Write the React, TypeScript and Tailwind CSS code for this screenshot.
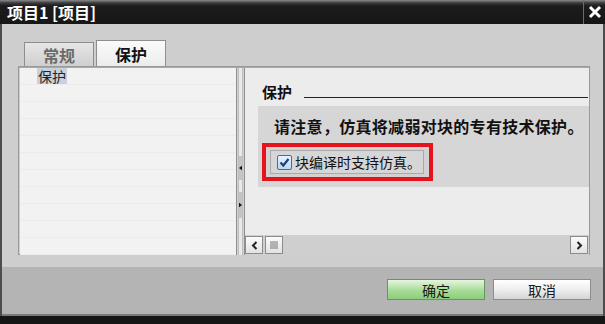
import React from "react";

const cjk = { fontFamily: '"Noto Sans CJK SC", "Noto Sans", sans-serif' };

function TitleBar() {
  return (
    <div className="relative h-[24px] flex items-center bg-[linear-gradient(#8a8a8a_0px,#3a3a3a_3px,#1c1c1c_6px,#161616_100%)]">
      <span className="pl-[7px] text-[16px] font-bold text-white leading-none">
        项目1 [项目]
      </span>
      <div className="ml-auto flex h-full items-center">
        <div className="h-full w-px bg-[#6a6a6a]" />
        <div className="w-[21px] flex items-center justify-center">
          <svg width="14" height="14" viewBox="0 0 14 14">
            <path d="M2 2 L12 12 M12 2 L2 12" stroke="#fff" strokeWidth="3" />
          </svg>
        </div>
      </div>
    </div>
  );
}

function Tabs() {
  return (
    <div className="flex items-end pl-[22px] pt-[17px] h-[42px]">
      <div className="w-[70px] h-[24px] flex items-center justify-center border border-b-0 border-[#8e8e8e] bg-[linear-gradient(#e6e6e6,#cfcfcf)] text-[16px] font-bold text-[#6b6b6b]">
        常规
      </div>
      <div className="ml-[2px] w-[70px] h-[26px] flex items-center justify-center border border-b-0 border-[#8e8e8e] bg-[linear-gradient(#fafafa,#ececec)] text-[16px] font-bold text-[#111]">
        保护
      </div>
    </div>
  );
}

function TreePane() {
  const rows = Array.from({ length: 11 });
  return (
    <div className="w-[216px] shrink-0 bg-[#f2f2f2] flex flex-col">
      {rows.map((_, i) => (
        <div key={i} className="h-[17px] shrink-0 border-b border-[#ebebeb] pl-[17px] flex items-center">
          {i === 0 && (
            <span className="px-[1px] bg-[#c9d1dc] text-[14px] leading-[16px] text-[#222]">保护</span>
          )}
        </div>
      ))}
    </div>
  );
}

function Splitter() {
  return (
    <div className="w-[9px] shrink-0 bg-[#d2d2d2] border-x border-[#8f8f8f] flex flex-col items-center">
      <div className="w-[5px] flex-1 bg-[#e9e9e9] border-x border-[#bdbdbd] flex flex-col">
        <div className="h-[88px]" />
        <div className="h-[24px] bg-[#c4c4c4] flex items-center justify-center">
          <svg width="4" height="6" viewBox="0 0 4 6">
            <path d="M4 0 L0 3 L4 6 Z" fill="#111" />
          </svg>
        </div>
        <div className="h-[12px]" />
        <div className="h-[26px] bg-[#c4c4c4] flex items-center justify-center">
          <svg width="4" height="6" viewBox="0 0 4 6">
            <path d="M0 0 L4 3 L0 6 Z" fill="#111" />
          </svg>
        </div>
      </div>
    </div>
  );
}

function ScrollBtn({ children }: { children: React.ReactNode }) {
  return (
    <div className="w-[18px] h-[18px] border border-[#8c8c8c] bg-[linear-gradient(#fbfbfb,#e2e2e2)] flex items-center justify-center">
      {children}
    </div>
  );
}

function RightPane() {
  return (
    <div className="flex-1 flex flex-col bg-[#ececec]">
      <div className="h-[36px] flex items-end pl-[17px] pb-[5px] pr-[1px]">
        <span className="text-[15px] font-bold leading-none text-[#111]">保护</span>
        <div className="ml-[12px] flex-1 h-px bg-[#222] mb-[1px]" />
      </div>
      <div className="ml-[13px] mt-[2px] h-[81px] bg-[#d6d6d6] flex flex-col">
        <div className="pl-[16px] pt-[9px] text-[16px] font-bold leading-[22px] text-[#111] tracking-[0.3px] whitespace-nowrap">
          请注意，仿真将减弱对块的专有技术保护。
        </div>
        <div className="ml-[4px] mt-[6px] w-[171px] h-[38px] border-[4px] border-[#e5141c] bg-[#d2d2d2] flex items-center pl-[4px]">
          <div className="h-[24px] w-[154px] border border-[#a9a9a9] bg-[#d6d6d6] flex items-center pl-[6px] gap-[3px]">
            <svg width="15" height="15" viewBox="0 0 15 15">
              <defs>
                <linearGradient id="cb" x1="0" y1="0" x2="0" y2="1">
                  <stop offset="0" stopColor="#e8f4ff" />
                  <stop offset="1" stopColor="#b7d6f2" />
                </linearGradient>
              </defs>
              <rect x="0.5" y="0.5" width="14" height="14" rx="1.5" fill="url(#cb)" stroke="#3d6fa3" />
              <path d="M3.5 7.5 L6.3 10.5 L11.5 4" stroke="#1f3f76" strokeWidth="2.2" fill="none" />
            </svg>
            <span className="text-[14px] leading-none text-[#111]">块编译时支持仿真。</span>
          </div>
        </div>
      </div>
      <div className="flex-1" />
      <div className="h-[20px] bg-[#cfcfcf] flex items-center gap-[2px] pr-[1px]">
        <ScrollBtn>
          <svg width="7" height="9" viewBox="0 0 7 9">
            <path d="M5.5 1 L2 4.5 L5.5 8" stroke="#222" strokeWidth="2" fill="none" />
          </svg>
        </ScrollBtn>
        <ScrollBtn>
          <svg width="8" height="8" viewBox="0 0 8 8">
            <path d="M1 0 V8 M3 0 V8 M5 0 V8 M7 0 V8" stroke="#777" strokeWidth="1" />
          </svg>
        </ScrollBtn>
        <div className="flex-1" />
        <ScrollBtn>
          <svg width="7" height="9" viewBox="0 0 7 9">
            <path d="M1.5 1 L5 4.5 L1.5 8" stroke="#222" strokeWidth="2" fill="none" />
          </svg>
        </ScrollBtn>
      </div>
    </div>
  );
}

function Footer() {
  return (
    <div className="h-[47px] bg-[#b4b4b4] flex items-center justify-end pr-[12px] gap-[8px] pb-[2px]">
      <button className="w-[98px] h-[21px] border border-[#62985a] bg-[linear-gradient(#e4f5de,#a8dc98_55%,#8ccd7a)] text-[14px] leading-none text-[#1a1a1a]">
        确定
      </button>
      <button className="w-[98px] h-[21px] border border-[#8c8c8c] bg-[linear-gradient(#ffffff,#ececec_55%,#d4d4d4)] text-[14px] leading-none text-[#1a1a1a]">
        取消
      </button>
    </div>
  );
}

export default function App() {
  return (
    <div className="w-[605px] h-[324px] flex flex-col overflow-hidden bg-[#161616]" style={cjk}>
      <TitleBar />
      <div className="flex-1 flex flex-col bg-[#cecece] border-x-2 border-[#4d4d4d]">
        <Tabs />
        <div className="ml-[16px] w-[572px] h-[189px] flex flex-col border border-[#9a9a9a] bg-[#cecece]">
          <div className="h-[3px] bg-[#e6e6e6] border-b border-[#a8a8a8]" />
          <div className="flex-1 flex pl-[1px]">
            <TreePane />
            <Splitter />
            <RightPane />
          </div>
        </div>
        <div className="h-[12px]" />
        <Footer />
        <div className="h-[2px] bg-[#7a7a7a]" />
      </div>
      <div className="h-[8px] bg-[#161616]" />
    </div>
  );
}
